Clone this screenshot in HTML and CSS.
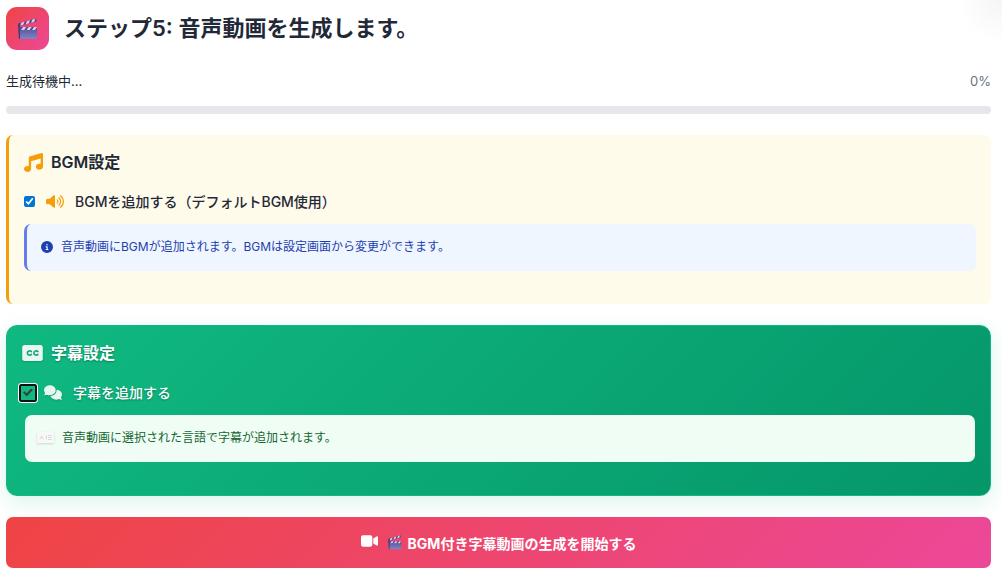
FILE: index.html
```html
<!DOCTYPE html>
<html lang="ja">

<head>
    <meta charset="UTF-8">
    <meta name="viewport" content="width=device-width, initial-scale=1.0">
    <title>ステップ5</title>
    <link rel="stylesheet" href="styles.css">
</head>

<body>
    <svg class="defs" aria-hidden="true">
        <defs>
            <linearGradient id="board" x1="0" y1="0" x2="0" y2="1">
                <stop offset="0" stop-color="#53538d" />
                <stop offset="1" stop-color="#8183cb" />
            </linearGradient>
            <symbol id="clapper" viewBox="0 0 20 22">
                <path fill="#53468b" d="M0 5.5 18 .5l.7 3L.8 8z" />
                <path fill="#d9ccf5" d="M3.5 4.6 6.6 3.7 5.2 6.8 2.2 7.6zM9 3l3-.8-1.3 3.2-3 .8zM14.4 1.5l2.9-.8-1.2 3.3-3 .8z" />
                <path fill="url(#board)" d="M1 9h18v12H1z" />
                <path fill="#3c3c70" d="M0 6.5h2V21H1z" />
                <path fill="#53468b" d="M1 9h18v3H1z" />
                <path fill="#d9ccf5" d="M5 9h3.2l-2 3H3zM10.500 9h3.200l-2 3H8.500zM16 9h3l-2 3h-3z" />
            </symbol>
        </defs>
    </svg>

    <main class="step">
        <header class="step-header">
            <div class="step-icon">
                <svg class="clapper"><use href="#clapper" /></svg>
            </div>
            <h2>ステップ5: 音声動画を生成します。</h2>
        </header>

        <div class="progress-info">
            <span id="progress-text">生成待機中...</span>
            <span class="progress-percent">0%</span>
        </div>
        <div class="progress-bar" role="progressbar" aria-labelledby="progress-text" aria-valuenow="0" aria-valuemin="0" aria-valuemax="100">
            <div class="progress-fill"></div>
        </div>

        <section class="card bgm">
            <h3>
                <svg class="title-icon" viewBox="0 0 512 512"><path fill="currentColor" d="M499.100 6.300c8.100 6 12.900 15.600 12.900 25.700v336c0 44.200-43 80-96 80s-96-35.800-96-80 43-80 96-80c11.200 0 22 1.600 32 4.600V147L192 223.800V432c0 44.200-43 80-96 80s-96-35.800-96-80 43-80 96-80c11.200 0 22 1.600 32 4.600V128c0-14.100 9.300-26.600 22.800-30.700l320-96c9.700-2.900 20.200-1.100 28.300 5z" /></svg>
                BGM設定
            </h3>
            <label class="option">
                <input type="checkbox" checked>
                <svg class="option-icon" viewBox="0 0 640 512"><path fill="currentColor" d="M301 35c12 5 19 16 19 29v384c0 13-7 24-19 29s-25 3-35-5L132 352H64c-35 0-64-29-64-64v-64c0-35 29-64 64-64h68L266 40c10-8 23-10 35-5z" /><path fill="none" stroke="currentColor" stroke-width="42" stroke-linecap="round" d="M397 199c37 29 37 85 0 114M457 125c85 66 85 196 0 262M518 50c133 103 133 309 0 412" /></svg>
                BGMを追加する（デフォルトBGM使用）
            </label>
            <p class="note">
                <svg class="note-icon" viewBox="0 0 512 512"><path fill="currentColor" d="M256 512a256 256 0 1 0 0-512 256 256 0 1 0 0 512zM216 336h24v-64h-24c-13 0-24-11-24-24s11-24 24-24h48c13 0 24 11 24 24v88h8c13 0 24 11 24 24s-11 24-24 24h-80c-13 0-24-11-24-24s11-24 24-24zm40-208a32 32 0 1 1 0 64 32 32 0 1 1 0-64z" /></svg>
                音声動画にBGMが追加されます。BGMは設定画面から変更ができます。
            </p>
        </section>

        <section class="card subtitle">
            <h3>
                <svg class="cc-icon" viewBox="0 0 576 448"><path fill="currentColor" d="M64 0C29 0 0 29 0 64v320c0 35 29 64 64 64h448c35 0 64-29 64-64V64c0-35-29-64-64-64z" /><path fill="none" stroke="#12a877" stroke-width="46" stroke-linecap="round" d="M255 185c-29-36-111-28-111 39s82 75 111 39M439 185c-29-36-111-28-111 39s82 75 111 39" /></svg>
                字幕設定
            </h3>
            <label class="option">
                <input type="checkbox" checked>
                <svg class="option-icon" viewBox="0 0 640 512"><path fill="currentColor" d="M208 352c115 0 208-79 208-176S323 0 208 0 0 79 0 176c0 39 15 74 40 103-4 10-9 19-15 28-5 7-10 13-14 17-8 8-11 15-11 12 0 9 7 16 16 16 29 0 57-8 81-18 34 12 72 18 111 18z" /><path fill="currentColor" d="M448 176c0 112-99 195-219 207 24 74 104 129 203 129 38 0 75-8 106-23 24 12 52 23 86 23 15 0 21-18 10-28-10-10-25-28-34-52 25-28 40-64 40-104 0-87-84-164-193-168 1 5 1 11 1 16z" /></svg>
                字幕を追加する
            </label>
            <p class="note">
                <svg class="lang-icon" viewBox="0 0 17 11"><rect width="17" height="11" rx="1" fill="#f8f8f8" /><path fill="none" stroke="#d5dad7" d="M3 7.500 4.800 4l1.700 3.500M9.500 4v3.500M11 3.500h3.500M11 5.500h3.500M11 7.500h3.500M9.500 3v1" /></svg>
                音声動画に選択された言語で字幕が追加されます。
            </p>
        </section>

        <button type="button" class="generate">
            <svg class="video-icon" viewBox="0 0 576 384"><path fill="currentColor" d="M64 0C29 0 0 29 0 64v256c0 35 29 64 64 64h256c35 0 64-29 64-64V64c0-35-29-64-64-64zM559 36c10 6 17 16 17 28v256c0 12-7 23-17 28s-23 5-33-2l-96-64-14-9V111l14-9 96-64c10-7 22-7 33-2z" /></svg>
            <svg class="clapper"><use href="#clapper" /></svg>
            BGM付き字幕動画の生成を開始する
        </button>
    </main>
</body>

</html>
```
FILE: styles.css
```css
* {
    box-sizing: border-box;
}

body {
    margin: 0;
    background: radial-gradient(circle at 100% 0, #f5f5f5 0, #fff 44px);
    font-family: Inter, "Noto Sans CJK JP", sans-serif;
    color: #1f2937;
}

.defs {
    position: absolute;
    width: 0;
    height: 0;
}

h2,
h3,
p {
    margin: 0;
}

.step {
    padding: 7px 11px 14px 6px;
}

.step-header {
    display: flex;
    align-items: center;
    gap: 15px;
    margin-bottom: 21px;
}

.step-icon {
    display: flex;
    align-items: center;
    justify-content: center;
    width: 43px;
    height: 43px;
    border-radius: 11px;
    background: linear-gradient(135deg, #ef4444, #ec4899);
}

.step-icon .clapper {
    width: 20px;
    height: 22px;
}

h2 {
    padding-bottom: 2px;
    font-size: 22px;
    line-height: 30px;
    font-weight: 600;
}

.progress-info {
    display: flex;
    justify-content: space-between;
    margin-bottom: 15px;
    font-size: 13px;
    line-height: 20px;
}

.progress-percent {
    color: #6b7280;
}

.progress-bar {
    height: 8px;
    margin-bottom: 21px;
    border-radius: 4px;
    background: #e5e7eb;
    overflow: hidden;
}

.progress-fill {
    width: 0;
    height: 100%;
    background: #ef4444;
}

.card {
    margin-bottom: 21px;
    padding: 15px 15px 33px;
}

.card h3 {
    display: flex;
    align-items: center;
    gap: 8px;
    margin-bottom: 16px;
    font-size: 16px;
    line-height: 24px;
    font-weight: 600;
}

.option {
    display: flex;
    align-items: center;
    margin-bottom: 11px;
    font-size: 14px;
    line-height: 23px;
    font-weight: 500;
}

.option input {
    width: 11px;
    height: 11px;
    margin: 0 11px 0 0;
}

.option-icon {
    width: 18px;
    height: 15px;
    margin-right: 11px;
}

.note {
    display: flex;
    align-items: center;
    gap: 8px;
    min-height: 47px;
    padding: 11px 12px 13px;
    border-radius: 7px;
    font-size: 12px;
    line-height: 22px;
}

.bgm {
    border-left: 3px solid #f59e0b;
    border-radius: 7px;
    background: #fffbeb;
}

.title-icon {
    width: 19px;
    height: 19px;
}

.bgm .title-icon,
.bgm .option-icon {
    color: #f59e0b;
}

.bgm input {
    accent-color: #0075d7;
}

.bgm .note {
    padding-left: 14px;
    border-left: 3px solid #667eea;
    background: #eff6ff;
    color: #1e40af;
}

.note-icon {
    width: 12px;
    height: 12px;
}

.subtitle {
    border: 1px solid #10b981;
    border-radius: 11px;
    background: linear-gradient(135deg, #10b981, #059669);
    box-shadow: 0 7px 22px rgba(16, 185, 129, 0.15);
    color: #fff;
    text-shadow: 0 1px 2px rgba(0, 0, 0, 0.3);
}

.subtitle h3 {
    font-weight: 700;
}

.cc-icon {
    width: 21px;
    height: 16px;
}

.subtitle .cc-icon,
.subtitle .option-icon {
    color: #e7f6f0;
    filter: drop-shadow(0 1px 1px rgba(0, 0, 0, 0.15));
}

.subtitle .option input {
    appearance: none;
    width: 18px;
    height: 18px;
    margin: 0 7px 0 -3px;
    border: 2px solid #111;
    border-radius: 2px;
    outline: 1px solid #fff;
    background: #10b981;
    display: grid;
    place-items: center;
}

.subtitle input:checked::before {
    content: "";
    width: 10px;
    height: 8px;
    background: #34433d;
    clip-path: polygon(0 50%, 17% 33%, 36% 58%, 83% 0, 100% 17%, 38% 100%);
}

.subtitle .note {
    margin-left: 3px;
    background: #f0fdf4;
    color: #166534;
    text-shadow: none;
}

.lang-icon {
    width: 17px;
    height: 11px;
    filter: drop-shadow(0 1px 1px rgba(0, 0, 0, 0.15));
}

.generate {
    display: flex;
    align-items: center;
    justify-content: center;
    gap: 6px;
    width: 100%;
    min-height: 51px;
    padding: 14px;
    border: 0;
    border-radius: 7px;
    background: linear-gradient(135deg, #ef4444, #ec4899);
    color: #fff;
    font-family: inherit;
    font-size: 14px;
    font-weight: 700;
    cursor: pointer;
}

.video-icon {
    width: 17px;
    height: 12px;
    margin: 0 4px 4px 0;
}

.generate .clapper {
    width: 14px;
    height: 15px;
}
```
